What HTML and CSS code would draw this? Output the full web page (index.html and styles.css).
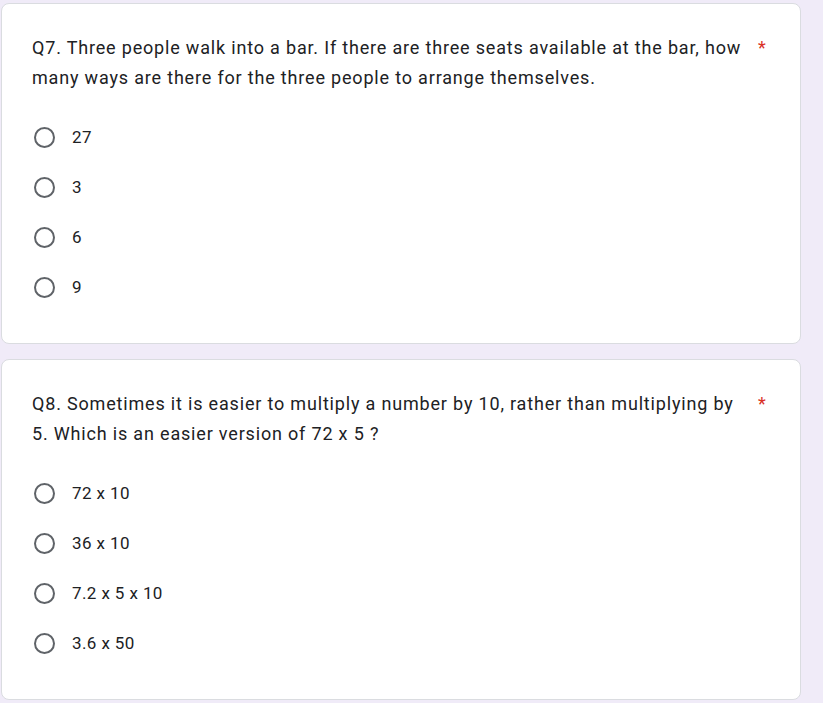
FILE: index.html
```html
<!DOCTYPE html>
<html>
<head>
<meta charset="utf-8">
<link rel="stylesheet" href="styles.css">
</head>
<body>
<div class="page">
  <div class="card">
    <div class="title-row">
      <div class="title">Q7. Three people walk into a bar. If there are three seats available at the bar, how many ways are there for the three people to arrange themselves.</div>
      <span class="req">*</span>
    </div>
    <div class="options">
      <div class="opt"><span class="radio"></span><span class="label">27</span></div>
      <div class="opt"><span class="radio"></span><span class="label">3</span></div>
      <div class="opt"><span class="radio"></span><span class="label">6</span></div>
      <div class="opt"><span class="radio"></span><span class="label">9</span></div>
    </div>
  </div>
  <div class="card">
    <div class="title-row">
      <div class="title">Q8. Sometimes it is easier to multiply a number by 10, rather than multiplying by 5. Which is an easier version of 72 x 5 ?</div>
      <span class="req">*</span>
    </div>
    <div class="options">
      <div class="opt"><span class="radio"></span><span class="label">72 x 10</span></div>
      <div class="opt"><span class="radio"></span><span class="label">36 x 10</span></div>
      <div class="opt"><span class="radio"></span><span class="label">7.2 x 5 x 10</span></div>
      <div class="opt"><span class="radio"></span><span class="label">3.6 x 50</span></div>
    </div>
  </div>
</div>
</body>
</html>
```
FILE: styles.css
```css
html, body {
  margin: 0;
  padding: 0;
  background: #f0ebf8;
  font-family: Roboto, "Liberation Sans", sans-serif;
  color: #202124;
}
.page {
  display: flex;
  flex-direction: column;
  gap: 15px;
  padding: 3px 22px 0 1px;
}
.card {
  background: #fff;
  border: 1px solid #dadce0;
  border-radius: 8px;
  padding: 29px 30px 30px 30px;
  height: 341px;
  box-sizing: border-box;
}
.title-row {
  display: flex;
  align-items: flex-start;
}
.title {
  flex: 1;
  font-size: 18px;
  letter-spacing: 0.82px;
  line-height: 30px;
}
.req {
  color: #d93025;
  font-size: 18px;
  line-height: 30px;
  padding-left: 12px;
  width: 12px;
}
.options {
  margin-top: 19px;
  display: flex;
  flex-direction: column;
}
.opt {
  display: flex;
  align-items: center;
  height: 50px;
}
.radio {
  width: 21px;
  height: 21px;
  border: 2px solid #5f6368;
  border-radius: 50%;
  box-sizing: border-box;
  margin-left: 2px;
  margin-right: 17px;
}
.label {
  font-size: 17px;
  letter-spacing: 0.4px;
}
```
